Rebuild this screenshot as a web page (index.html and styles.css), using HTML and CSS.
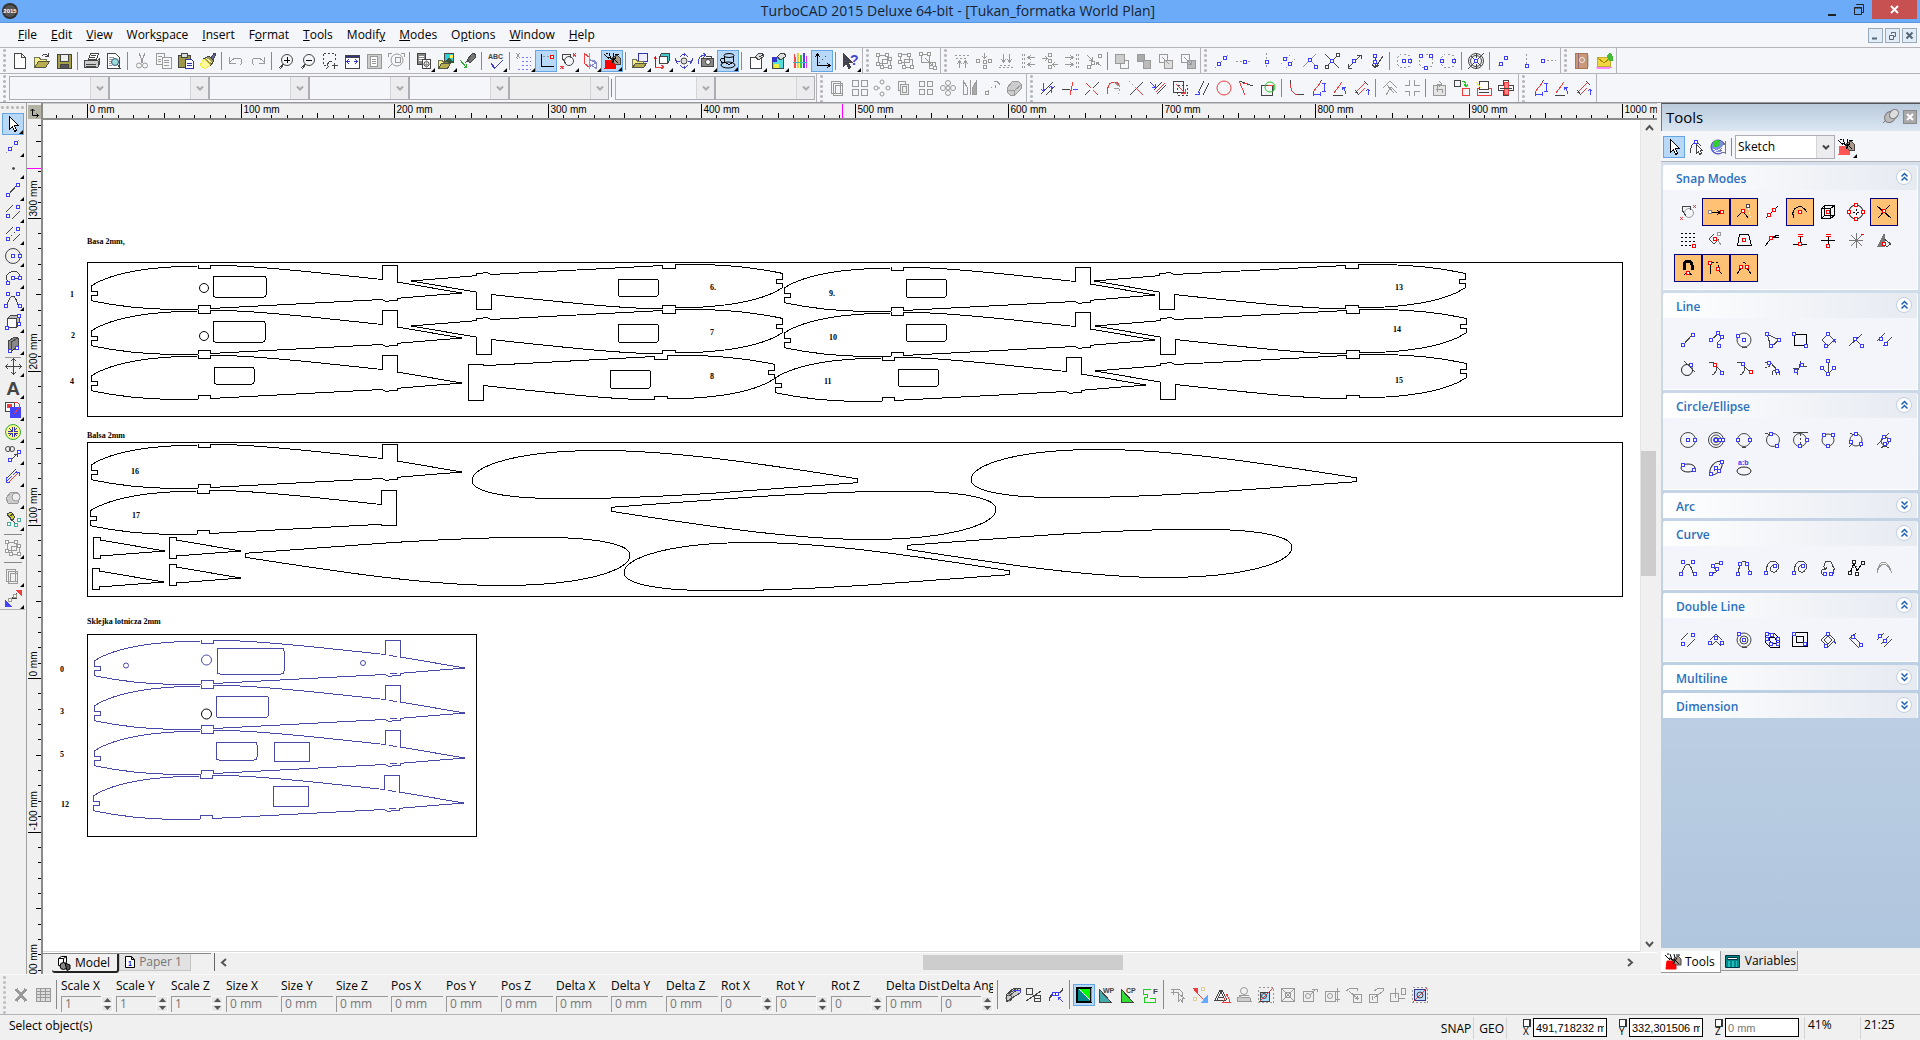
FILE: index.html
```html
<!DOCTYPE html>
<html lang="en">
<head>
    <meta charset="UTF-8">
    <meta name="viewport" content="width=device-width, initial-scale=1.0">
    <title>TurboCAD 2015 Deluxe 64-bit - [Tukan_formatka World Plan]</title>
    <link rel="stylesheet" href="styles.css">
</head>
<body>
    <header class="titlebar">
        <svg class="app-logo" width="16" height="16" viewBox="0 0 16 16"><circle cx="8" cy="8" r="8" fill="#333"/><circle cx="8" cy="8" r="6" fill="#555"/><text x="8" y="10" text-anchor="middle">2015</text></svg>
        <h1>TurboCAD 2015 Deluxe 64-bit - [Tukan_formatka World Plan]</h1>
        <div class="window-buttons">
            <button aria-label="Minimize"><svg width="10" height="13"><path d="M1 12h8" stroke="#222" stroke-width="2"/></svg></button>
            <button aria-label="Restore"><svg width="12" height="13"><path d="M1.500 4.500h7v7h-7zM1 5h8M3.500 2v-.5h7v8h-2" fill="none" stroke="#222"/></svg></button>
            <button class="close" aria-label="Close"><svg width="9" height="9"><path d="M1 1l7 7M8 1l-7 7" stroke="#fff" stroke-width="2"/></svg></button>
        </div>
    </header>

    <nav class="menubar">
        <a href="#"><u>F</u>ile</a>
        <a href="#"><u>E</u>dit</a>
        <a href="#"><u>V</u>iew</a>
        <a href="#">Work<u>s</u>pace</a>
        <a href="#"><u>I</u>nsert</a>
        <a href="#">F<u>o</u>rmat</a>
        <a href="#"><u>T</u>ools</a>
        <a href="#">Modif<u>y</u></a>
        <a href="#"><u>M</u>odes</a>
        <a href="#">O<u>p</u>tions</a>
        <a href="#"><u>W</u>indow</a>
        <a href="#"><u>H</u>elp</a>
        <div class="mdi-buttons">
            <button aria-label="Minimize drawing"><svg width="9" height="9"><path d="M1 7.500h5" stroke="#567" stroke-width="2"/></svg></button>
            <button aria-label="Restore drawing"><svg width="9" height="9"><path d="M1.500 4.500h4v4h-4zM3.500 3v-1.500h4v4h-1.500" fill="none" stroke="#567"/></svg></button>
            <button aria-label="Close drawing"><svg width="9" height="9"><path d="M1.500 1.500l6 6M7.500 1.500l-6 6" stroke="#567" stroke-width="2"/></svg></button>
        </div>
    </nav>

    <div class="toolbar-row row-one">
        <div class="toolbar" data-tools="new open save | print preview | cut copy paste brush | undo redo | zoomin zoomout zoomwin zoomext zoompage zoomall | insert> picture> pen | spell> | grid> ortho* lock> mirror> bag*> | openview> cube> orbit> camera> coffee*> | page> pagecolor> pencils ucs* | help>"></div>
        <div class="toolbar" data-tools="group ungroup explode"></div>
        <div class="toolbar" data-tools="altop almid albot alleft alcen alright alpoint | front back forward backward"></div>
        <div class="toolbar" data-tools="sgfree sghor sgver sgpar sgperp sgcross sgline sgangle | sgc1 sgc2 sgc3 | sgwheel | sgp1 sgp2 sgp3"></div>
        <div class="toolbar" data-tools="book mail"></div>
    </div>

    <div class="toolbar-row row-two">
        <div class="toolbar">
            <span class="combo"><select disabled aria-label="Layer"></select></span>
            <span class="combo"><select disabled aria-label="Pen style"></select></span>
            <span class="combo"><select disabled aria-label="Pen width"></select></span>
            <span class="combo"><select disabled aria-label="Pen pattern"></select></span>
            <span class="combo"><select disabled aria-label="Brush style"></select></span>
            <span class="combo grey"><select disabled aria-label="Colour"></select></span>
            <span class="sep"></span>
            <span class="combo"><select disabled aria-label="Material"></select></span>
            <span class="combo grey"><select disabled aria-label="Print style"></select></span>
        </div>
        <div class="toolbar" data-tools="cp1 cp2 cp3 cp4 cp5 cp6 cp7 cp8 solid"></div>
        <div class="toolbar" data-tools="m1 m2 m3 m4 m5 m6 m7 m8 m9 m10 m11 | m12 m13 m14 m15 | m16 m17 | m18 m19 m20 m21"></div>
        <div class="toolbar" data-tools="m13 m14 m15"></div>
    </div>

    <main>
        <div class="left-tools">
            <div class="toolbar vertical" data-tools="select*> sgfree> point> line> dline> mline> circle> arc> curve> box> slab> pan> text> fill> snap> dimension> modify> shape> spray> | group> | cp1> vertex>"></div>
        </div>

        <section class="drawing">
            <svg class="ruler-top" id="rulerTop"></svg>
            <svg class="ruler-left" id="rulerLeft"></svg>
            <button class="ruler-corner" aria-label="Origin"><svg width="11" height="11"><path d="M3.500 2v6.500h6M1.500 4l2-2 2 2M7.500 6.500l2 2-2 2" fill="none" stroke="#000"/></svg></button>
            <svg class="sheet" id="sheet">
                <defs>
                    <path id="rib" d="M0 21C20 8 60 1.500 107 1V3.500H119.500V.3C160 0 230 8 291 14.500V0H306V17L371 28 306 33.300V35.500H302L295 36.500 291 34.500 119.500 43.500V40.200H107V44C60 46 25 41 0 35.700V30H6V26H0Z"/>
                    <path id="ribShort" d="M0 21C20 8 60 1.500 107 1V3.500H119.500V.3C160 0 230 8 291 14.500V0H306V35.500H291V34.300L119.500 43.500V40.200H107V44C60 46 25 41 0 35.700V30H6V26H0Z"/>
                    <path id="foil" d="M0 0C0-14 40-30 125-30.500 210-31 320-12 385-2.300V1.700L240 12.300C180 16 130 18 88 17.600 30 17.500 0 10 0 0Z"/>
                    <path id="wedge" d="M0 0H7V3L72 14 7 19V21H0Z"/>
                    <path id="ribJoint" d="M295 15l8 2M296 34l7-1"/>
                </defs>
                <!-- drawn in window coordinates, shifted to the sheet's corner -->
                <g transform="translate(-43 -120)">
                    <g class="ink">
                        <path d="M87.500 262.500H1622.500V416.500H87.500ZM87.500 442.500H1622.500V596.500H87.500ZM87.500 634.500H476.500V836.500H87.500Z"/>
                        <use href="#rib" x="91" y="265"/>
                        <use href="#rib" x="91" y="310"/>
                        <use href="#rib" x="91" y="355"/>
                        <use href="#rib" transform="translate(782 309) rotate(180)"/>
                        <use href="#rib" transform="translate(782 354) rotate(180)"/>
                        <use href="#ribShort" transform="translate(774 400) rotate(180)"/>
                        <use href="#rib" x="784" y="267"/>
                        <use href="#rib" x="784" y="312"/>
                        <use href="#rib" x="775" y="357"/>
                        <use href="#rib" transform="translate(1465 309) rotate(180)"/>
                        <use href="#rib" transform="translate(1466 354) rotate(180)"/>
                        <use href="#rib" transform="translate(1466 399) rotate(180)"/>
                        <use href="#rib" x="91" y="444"/>
                        <use href="#ribShort" x="90" y="490"/>
                        <use href="#foil" x="472" y="481"/>
                        <use href="#foil" x="971" y="480"/>
                        <use href="#foil" x="624" y="573"/>
                        <use href="#foil" transform="translate(996 509) rotate(180)"/>
                        <use href="#foil" transform="translate(630 555) rotate(180)"/>
                        <use href="#foil" transform="translate(1292 547) rotate(180)"/>
                        <use href="#wedge" x="93" y="537"/>
                        <use href="#wedge" x="169" y="537"/>
                        <use href="#wedge" x="92" y="568"/>
                        <use href="#wedge" x="169" y="564"/>
                        <rect x="213" y="276" width="53" height="21" rx="2"/>
                        <rect x="213" y="321" width="52" height="21" rx="2"/>
                        <rect x="214" y="367" width="40" height="17" rx="2"/>
                        <rect x="618" y="279" width="40" height="17" rx="1"/>
                        <rect x="618" y="324" width="40" height="18" rx="1"/>
                        <rect x="610" y="370" width="40" height="18" rx="1"/>
                        <rect x="906" y="279" width="40" height="18" rx="1"/>
                        <rect x="906" y="324" width="40" height="17" rx="1"/>
                        <rect x="898" y="369" width="40" height="17" rx="1"/>
                        <circle cx="204" cy="288" r="4.500"/>
                        <circle cx="204" cy="336" r="4.500"/>
                        <circle cx="206.500" cy="714" r="5"/>
                    </g>
                    <g class="ink blue">
                        <use href="#rib" x="94" y="640"/><use href="#ribJoint" x="94" y="640"/>
                        <use href="#rib" x="94" y="685"/><use href="#ribJoint" x="94" y="685"/>
                        <use href="#rib" x="94" y="730"/><use href="#ribJoint" x="94" y="730"/>
                        <use href="#rib" x="93" y="775"/><use href="#ribJoint" x="93" y="775"/>
                        <circle cx="206.500" cy="660" r="5"/>
                        <circle cx="126" cy="665.500" r="2.500"/>
                        <circle cx="363" cy="663" r="2.500"/>
                        <rect x="217" y="648" width="67" height="26" rx="3"/>
                        <rect x="216" y="696" width="52" height="21" rx="1"/>
                        <rect x="216" y="742" width="41" height="18" rx="3"/>
                        <rect x="274" y="742" width="35" height="19"/>
                        <rect x="273" y="786" width="35" height="20"/>
                    </g>
                    <g class="notes">
                        <text x="87" y="244">Basa 2mm,</text>
                        <text x="87" y="438">Balsa 2mm</text>
                        <text x="87" y="624">Sklejka lotnicza 2mm</text>
                        <text x="70" y="297">1</text>
                        <text x="71" y="338">2</text>
                        <text x="70" y="384">4</text>
                        <text x="710" y="290">6.</text>
                        <text x="710" y="335">7</text>
                        <text x="710" y="379">8</text>
                        <text x="829" y="296">9.</text>
                        <text x="829" y="340">10</text>
                        <text x="824" y="384">11</text>
                        <text x="1395" y="290">13</text>
                        <text x="1393" y="332">14</text>
                        <text x="1395" y="383">15</text>
                        <text x="131" y="474">16</text>
                        <text x="132" y="518">17</text>
                        <text x="60" y="672">0</text>
                        <text x="60" y="714">3</text>
                        <text x="60" y="757">5</text>
                        <text x="61" y="807">12</text>
                    </g>
                </g>
            </svg>
            <div class="scroll-v">
                <button aria-label="Scroll up"><svg width="9" height="8"><path d="M1 6l3.500-4 3.500 4"/></svg></button>
                <span class="thumb"></span>
                <button aria-label="Scroll down"><svg width="9" height="8"><path d="M1 2l3.500 4 3.500-4"/></svg></button>
            </div>
            <div class="sheet-bar">
                <div class="sheet-tabs">
                    <button class="sheet-tab active"><svg width="16" height="16"><path d="M2.500 3.500l3-2h5v6l-3 3h-5z" fill="#fff" stroke="#000"/><path d="M2.500 3.500h5l3-2M7.500 3.500v7" fill="none" stroke="#000"/><circle cx="7.500" cy="11" r="3.500" fill="#888" stroke="#000"/><path d="M9 8l5 2v4l-3 1.500z" fill="#555" stroke="#000"/></svg>Model</button>
                    <button class="sheet-tab"><svg width="12" height="14"><path d="M1.500 1.500h6l3 3v8h-9zM7.500 1.500v3h3" fill="#fff" stroke="#000"/><text x="4" y="11">1</text></svg>Paper 1</button>
                </div>
                <div class="scroll-h">
                    <button aria-label="Scroll left"><svg width="8" height="9"><path d="M6 1l-4 3.500 4 3.500"/></svg></button>
                    <span class="thumb"></span>
                    <button aria-label="Scroll right"><svg width="8" height="9"><path d="M2 1l4 3.500-4 3.500"/></svg></button>
                </div>
            </div>
        </section>

        <aside>
            <div class="palette-title">
                <h2>Tools</h2>
                <button aria-label="Pin"><svg width="18" height="17"><path d="M1 15l5-5" stroke="#777"/><ellipse cx="8" cy="9" rx="5" ry="6" transform="rotate(40 8 9)" fill="#bbb" stroke="#777"/><ellipse cx="12" cy="6" rx="4" ry="5" transform="rotate(40 12 6)" fill="#ddd" stroke="#777"/></svg></button>
                <button class="palette-close" aria-label="Close palette"><svg width="8" height="8"><path d="M1 1l6 6M7 1l-6 6" stroke="#fff" stroke-width="2"/></svg></button>
            </div>
            <div class="palette-bar">
                <div class="tools" data-tools="select* node globe |"></div>
                <span class="combo"><select aria-label="Tool set"><option>Sketch</option></select></span>
                <div class="tools" data-tools="bagsoft>"></div>
            </div>
            <div class="palette-body">
                <section class="group">
                    <h3>Snap Modes <button data-chevron="up"></button></h3>
                    <div class="grid" data-tools="sn1 sn2* sn3* sn4 sn5* sn6 sn7 sn8* sn9 sn10 sn11 sn12 sn13 sn14 sn15 sn16 sn17* sn18* sn19*"></div>
                </section>
                <section class="group">
                    <h3>Line <button data-chevron="up"></button></h3>
                    <div class="grid" data-tools="line poly polygon tri rect rrect perp para ln1 ln2 ln3 ln4 ln5 ln6"></div>
                </section>
                <section class="group">
                    <h3>Circle/Ellipse <button data-chevron="up"></button></h3>
                    <div class="grid" data-tools="circle conc c2 c3 c4 c5 c6 c7 el1 el2 el3"></div>
                </section>
                <section class="group">
                    <h3>Arc <button data-chevron="down"></button></h3>
                </section>
                <section class="group">
                    <h3>Curve <button data-chevron="up"></button></h3>
                    <div class="grid" data-tools="curve cv1 cv2 cv3 cv3 cv4 cv5 cv6"></div>
                </section>
                <section class="group">
                    <h3>Double Line <button data-chevron="up"></button></h3>
                    <div class="grid" data-tools="dline d1 d2 d3 d4 d5 d6 d7"></div>
                </section>
                <section class="group">
                    <h3>Multiline <button data-chevron="down"></button></h3>
                </section>
                <section class="group">
                    <h3>Dimension <button data-chevron="down"></button></h3>
                </section>
            </div>
            <div class="palette-tabs">
                <button class="active" data-icon="bag">Tools</button>
                <button data-icon="calc">Variables</button>
            </div>
        </aside>
    </main>

    <div class="inspector">
        <div class="tools" data-tools="cancel table |"></div>
        <div class="fields" id="fields"></div>
        <div class="tools" data-tools="| in1 in2 in3 | in4* in5 in6 in7 | in8 in9 in10 in11 in12 in13 in14 in15 in16 in17 in18 in19"></div>
    </div>

    <footer class="statusbar">
        <span class="message">Select object(s)</span>
        <span class="mode">SNAP</span>
        <span class="mode">GEO</span>
        <div class="coords">
            <label class="lock"><input type="checkbox">X</label><input class="coord" aria-label="X" value="491,718232 m">
            <label class="lock"><input type="checkbox">Y</label><input class="coord" aria-label="Y" value="332,301506 m">
            <label class="lock"><input type="checkbox">Z</label><input class="coord" aria-label="Z" value="0 mm" disabled>
        </div>
        <span class="zoom">41%</span>
        <span class="clock">21:25</span>
    </footer>

    <script src="script.js"></script>
</body>
</html>
```
FILE: styles.css
```css
* {
    box-sizing: border-box;
}

body {
    margin: 0;
    height: 100vh;
    display: flex;
    flex-direction: column;
    background-color: #f0f0f0;
    color: #000;
    font-family: "Open Sans", "Noto Sans", sans-serif;
    font-size: 12px;
    line-height: 16px;
    overflow: hidden;
}

button {
    margin: 0;
    padding: 0;
    border: none;
    background: none;
    font: inherit;
    color: inherit;
    display: flex;
    align-items: center;
    justify-content: center;
}

input,
select {
    font: inherit;
    margin: 0;
    border-radius: 0;
    appearance: none;
}

svg {
    display: block;
    flex: none;
}

/* title bar */

.titlebar {
    display: flex;
    align-items: center;
    height: 23px;
    flex: none;
    padding-left: 2px;
    background-color: #6babf8;
    border-bottom: 1px solid #5a96dc;
}

.app-logo text {
    font: bold 6px "Liberation Sans", sans-serif;
    fill: #fff;
}

h1 {
    flex: 1;
    margin: 0;
    padding-left: 80px;
    text-align: center;
    font-size: 14px;
    line-height: 20px;
    font-weight: 400;
    color: #1a2430;
}

.window-buttons {
    display: flex;
    align-self: flex-start;
    padding-right: 3px;
}

.window-buttons button {
    width: 27px;
    height: 19px;
}

.window-buttons .close {
    width: 45px;
    background-color: #c75050;
}

/* menu */

.menubar {
    display: flex;
    align-items: center;
    gap: 14px;
    height: 25px;
    flex: none;
    padding: 0 3px 0 18px;
    background-color: #f5f6f9;
    border-bottom: 1px solid #b4b4b8;
}

.menubar a {
    color: #000;
    text-decoration: none;
}

.mdi-buttons {
    display: flex;
    gap: 2px;
    margin-left: auto;
}

.mdi-buttons button {
    width: 15px;
    height: 15px;
    border: 1px solid #9ab;
    background-color: #e3edf7;
}

/* toolbars */

.toolbar-row {
    display: flex;
    flex: none;
    background-color: #f5f6f9;
    border-bottom: 1px solid #b4b4b8;
}

.row-one {
    height: 26px;
}

.row-two {
    height: 29px;
    border-bottom-color: #98989c;
}

.toolbar,
.tools {
    display: flex;
    align-items: center;
    flex: none;
}

.toolbar-row .toolbar {
    padding: 0 1px 0 9px;
    border-right: 1px solid #b4b4b8;
    background: radial-gradient(circle, #b8b8bc 1px, transparent 2px) 2px 0 / 5px 5px repeat-y;
}

.toolbar-row .toolbar + .toolbar {
    padding-left: 10px;
}

.tool {
    position: relative;
    width: 22px;
    height: 22px;
    flex: none;
}

.tool.active {
    background-color: #b8d8f8;
    border: 1px solid #66a5e4;
}

/* black corner on tools that open a fly-out */
.tool.fly::after {
    content: "";
    position: absolute;
    right: 0;
    bottom: 0;
    border: 2px solid #000;
    border-top-color: transparent;
    border-left-color: transparent;
}

.tool svg {
    shape-rendering: crispEdges;
}

.tool circle,
.tool ellipse {
    shape-rendering: auto;
}

.tool text,
.sheet-tab text {
    font-family: "Liberation Sans", sans-serif;
    font-weight: bold;
}

.sheet-tab text {
    font-size: 7px;
    fill: #00c;
}

.sep {
    width: 2px;
    height: 18px;
    margin: 0 2px;
    flex: none;
    border-left: 1px solid #888;
}

.combo {
    display: flex;
    width: 100px;
    height: 24px;
    flex: none;
    border: 1px solid #acacb2;
    background-color: #f5f6f9;
}

.combo.grey select {
    background-color: #efeff0;
}

.combo select {
    flex: 1;
    min-width: 0;
    padding: 0 2px;
    border: none;
    background: none;
    opacity: 1;
}

.combo-arrow {
    width: 18px;
    display: grid;
    place-items: center;
    border-left: 1px solid #d4d4d6;
    background-color: #ececee;
}

/* work area */

main {
    flex: 1;
    min-height: 0;
    display: grid;
    grid-template-columns: 27px 1fr 259px;
}

.left-tools {
    border-right: 1px solid #a0a0a0;
    background-color: #f0f0f0;
}

.toolbar.vertical {
    flex-direction: column;
    width: 25px;
    padding: 10px 0 0 1px;
    border-bottom: 1px solid #b4b4b8;
    background: radial-gradient(circle, #b8b8bc 1px, transparent 2px) 0 2px / 5px 5px repeat-x;
}

.vertical .sep {
    width: 18px;
    height: 1px;
    margin: 3px 0 2px;
    border-left: none;
    border-top: 1px solid #888;
}

.drawing {
    display: grid;
    grid-template-columns: 16px 1fr 17px;
    grid-template-rows: 17px 1fr 22px;
    margin-right: 4px;
    min-width: 0;
}

.ruler-top {
    grid-area: 1 / 2 / 2 / 4;
    width: 100%;
    height: 17px;
    border-top: 1px solid #c8c8c8;
    border-bottom: 2px solid #8a8a8a;
}

.ruler-left {
    grid-area: 1 / 1 / 4 / 2;
    width: 16px;
    height: 100%;
    border-right: 2px solid #8a8a8a;
}

.ruler-top text,
.ruler-left text {
    font: 10px "Liberation Sans", sans-serif;
    fill: #000;
}

.ruler-top,
.ruler-left,
.ink {
    shape-rendering: crispEdges;
}

.ruler-corner {
    grid-area: 1 / 1;
    width: 13px;
    height: 14px;
    margin: 2px 0 0 1px;
    background-color: #b4b4a4;
    z-index: 1;
}

.sheet {
    grid-area: 2 / 2;
    width: 100%;
    height: 100%;
    background-color: #fff;
    border-bottom: 1px solid #d8d8d8;
}

.ink {
    fill: none;
    stroke: #000;
    stroke-width: 1px;
}

.ink circle {
    shape-rendering: auto;
}

.ink.blue {
    stroke: #4848a8;
}

.notes {
    font: bold 8px "Liberation Serif", serif;
}

.scroll-v,
.scroll-h {
    display: grid;
    background-color: #f0f0f0;
}

.scroll-v svg,
.scroll-h svg {
    fill: none;
    stroke: #555;
    stroke-width: 2px;
}

.thumb {
    background-color: #cdcdcd;
}

.scroll-v {
    grid-area: 2 / 3;
    grid-template-rows: 16px 315fr 126fr 360fr 16px;
    border-left: 1px solid #e4e4e4;
}

.scroll-v .thumb {
    grid-row: 3;
    width: 15px;
}

.scroll-v button:last-child {
    grid-row: 5;
}

.sheet-bar {
    grid-area: 3 / 2 / 4 / 4;
    display: flex;
    align-items: flex-start;
    border-top: 1px solid #fff;
}

.sheet-tabs {
    display: flex;
    align-items: flex-start;
    width: 168px;
    padding-left: 9px;
    border-top: 1px solid #888;
}

.sheet-tab {
    height: 17px;
    padding: 0 8px 0 4px;
    gap: 3px;
    color: #777;
    background-color: #e2e2e2;
    border: 1px solid #c4c4c4;
    border-top: none;
}

.sheet-tab.active {
    height: 19px;
    color: #000;
    background-color: #f0f0f0;
    border: none;
    border-right: 2px solid #222;
    border-bottom: 2px solid #222;
    border-radius: 0 0 3px 3px;
    padding: 0 7px 0 4px;
}

.scroll-h {
    flex: 1;
    height: 18px;
    grid-template-columns: 18px 690fr 200fr 498fr 18px;
    align-items: center;
    margin-left: 3px;
    padding-right: 18px;
    border-left: 1px solid #666;
}

.scroll-h .thumb {
    grid-column: 3;
    height: 15px;
}

.scroll-h button:last-child {
    grid-column: 5;
}

/* palette */

aside {
    display: flex;
    flex-direction: column;
    min-width: 0;
}

.palette-title {
    display: flex;
    align-items: center;
    gap: 3px;
    height: 28px;
    flex: none;
    padding: 0 3px 2px 4px;
    border-top: 1px solid #555;
    border-left: 1px solid #777;
    background-image: linear-gradient(#b9cadc, #dbe6f2);
}

h2 {
    flex: 1;
    margin: 0;
    font-size: 15px;
    line-height: 20px;
    font-weight: 400;
}

.palette-close {
    width: 14px;
    height: 14px;
    background-color: #a8a8a8;
    border: 1px solid #888;
}

.palette-bar {
    display: flex;
    align-items: center;
    height: 31px;
    flex: none;
    padding: 2px 0 0 2px;
    background-color: #f5f6f9;
    border-bottom: 1px solid #b4b4b8;
}

.palette-bar .combo {
    background-color: #fff;
}

.palette-bar .combo select {
    color: #000;
}

.palette-body {
    flex: 1;
    display: flex;
    flex-direction: column;
    gap: 3px;
    padding: 3px 2px;
    background-image: linear-gradient(#d5e0ec, #b0c6de);
}

.group {
    background-color: #f3f5fa;
    border-right: 1px solid #fff;
    border-radius: 3px 3px 0 0;
}

h3 {
    display: flex;
    align-items: center;
    justify-content: space-between;
    height: 25px;
    margin: 0;
    padding: 3px 5px 0 13px;
    font-size: 12px;
    line-height: 20px;
    font-weight: 600;
    color: #2a70c0;
    background-image: linear-gradient(90deg, #fff, #e6eaf1);
    border-radius: 3px 3px 0 0;
}

h3 button {
    width: 16px;
    height: 16px;
    margin-top: -4px;
    border: 1px solid #c2cddd;
    border-radius: 8px;
    background-color: #fff;
}

.grid {
    display: grid;
    grid-template-columns: repeat(8, 28px);
    grid-auto-rows: 28px;
    padding: 8px 11px 7px;
    border-bottom: 1px solid #fff;
}

.grid .tool {
    width: 28px;
    height: 28px;
}

.grid .tool.active {
    background-color: #ffc274;
    border: 1px solid #000080;
}

.palette-tabs {
    display: flex;
    align-items: flex-start;
    height: 26px;
    flex: none;
    padding-top: 3px;
}

.palette-tabs button {
    height: 20px;
    gap: 3px;
    padding: 0 1px 0 3px;
    background-color: #e8e8e8;
    border-right: 1px solid #999;
    border-bottom: 1px solid #999;
}

.palette-tabs .active {
    height: 22px;
    padding: 0 5px 0 3px;
    background-color: #fff;
}

/* inspector bar */

.inspector {
    display: flex;
    align-items: center;
    height: 41px;
    flex: none;
    padding-left: 10px;
    border-top: 1px solid #f8f8fc;
    border-bottom: 1px solid #b4b4b8;
    background: radial-gradient(circle, #c0c0c4 1px, transparent 2px) 2px 0 / 5px 5px repeat-y;
}

.fields {
    display: flex;
    gap: 3px;
    padding-left: 1px;
}

.field {
    width: 52px;
}

.field label {
    display: block;
    height: 18px;
    white-space: nowrap;
}

.field:last-child label {
    overflow: hidden;
}

.field-box {
    display: flex;
    height: 16px;
}

.field input {
    flex: 1;
    min-width: 0;
    padding: 0 3px;
    color: #777;
    background-color: #f0f0f0;
    border: none;
    border-top: 1px solid #999;
    border-left: 1px solid #999;
}

.spin {
    width: 12px;
    display: flex;
    flex-direction: column;
    justify-content: space-between;
}

.spin button {
    height: 8px;
    background-color: #e6e6e6;
    border: 1px solid #f8f8f8;
}

.inspector > .tools:last-child {
    padding-left: 2px;
}

.inspector > .tools .sep {
    height: 29px;
}

/* status bar */

.statusbar {
    display: flex;
    align-items: center;
    height: 25px;
    flex: none;
    padding: 0 18px 0 9px;
}

.message {
    flex: 1;
    padding-bottom: 3px;
}

.mode {
    height: 22px;
    line-height: 24px;
    padding: 0 2px 0 5px;
    border-right: 1px solid #d4d4d4;
}

.coords {
    display: flex;
    align-items: center;
    padding-left: 15px;
}

.lock {
    width: 11px;
    font-size: 10px;
    line-height: 9px;
    padding-left: 1px;
}

.lock input {
    display: block;
    width: 8px;
    height: 8px;
    border: 1px solid #333;
    border-right-width: 2px;
    background-color: #fff;
}

.coord {
    width: 74px;
    height: 19px;
    margin-right: 11px;
    padding: 0 2px;
    border: 1px solid #000;
    background-color: #fff;
    font: 11px "Liberation Sans", sans-serif;
}

.coord:disabled {
    color: #777;
    margin-right: 5px;
}

.zoom,
.clock {
    height: 22px;
    padding-left: 3px;
    border-left: 1px solid #d4d4d4;
}

.zoom {
    width: 56px;
}

.clock {
    width: 42px;
}
```
FILE: script.js
```js
const GREY = '#999', DARK = '#444', BLUE = '#3c3cff', RED = '#f03c3c';

// small drawing helpers, all on an 18 x 18 box
const p = (d, c = DARK, dash) => `<path d="${d}" fill="none" stroke="${c}"${dash ? ' stroke-dasharray="2 2"' : ''}/>`;
const f = (d, fill, c = DARK) => `<path d="${d}" fill="${fill}" stroke="${c}"/>`;
const o = (x, y, r, c = DARK, fill = 'none') => `<circle cx="${x}" cy="${y}" r="${r}" fill="${fill}" stroke="${c}"/>`;
const t = (x, y, size, str, c = DARK) => `<text x="${x}" y="${y}" font-size="${size}" fill="${c}">${str}</text>`;
// grip squares, given as x,y pairs
const n = (pts, c = BLUE) => pts.split(' ').map(s => {
    const [x, y] = s.split(',').map(Number);
    return `<rect x="${x - 1.5}" y="${y - 1.5}" width="3" height="3" fill="#fff" stroke="${c}"/>`;
}).join('');
const r = (x, y, w, h, c = GREY, fill = 'none') => `<rect x="${x}.5" y="${y}.5" width="${w}" height="${h}" fill="${fill}" stroke="${c}"/>`;

const BAG = red => f('M3 8h9v8h-10z', red, red) + f('M8 7l6-4 3 3v6h-5z', '#a98') + p('M1 2l5 5M6 1l2 6M10 1l1 4M3 1h2M10 6l5 5M13 5l-4 6M12 2h4M5 5l6 3', '#000');
const LENS = o(10, 8, 5.5) + p('M6 12l-4 4M7 12l-4 5');

const icons = {
    new: f('M3.500 1.500h7l4 4v11h-11z', '#fff') + p('M10.500 1.500v4h4'),
    open: f('M1.500 15.500v-10h5l1 2h6v2', '#f4f08c', '#775') + f('M1.500 15.500l4-6h11l-4 6z', '#b8ae50', '#554') + p('M9 4q3-3 6 0M15 1v3h-3'),
    save: f('M2.500 2.500h14v14h-14z', '#a6a048') + f('M5.500 2.500h8v7h-8z', '#eee') + f('M5.500 12.500h8v4h-8z', '#555'),
    print: f('M5.500 7.500l2-6h8l-2 6z', '#fff') + f('M1.500 8.500h13l2-2v6l-2 3h-13z', '#ccc') + p('M3 12h10M3 14h10M8 3h5M7 5h5M15 9v6'),
    preview: f('M2.500 1.500h8l4 4v11h-12z', '#fff') + o(10, 10, 3.5, '#357', '#9dd') + p('M12 12l4 5') + p('M4 5h5M4 7h3M4 9h2M4 11h2M4 13h3', GREY),
    cut: p('M6 1l4 10M12 1l-4 10', GREY) + o(6, 13.5, 2.5, GREY) + o(12, 13.5, 2.5, GREY),
    copy: r(1, 1, 8, 11) + r(7, 5, 9, 11, GREY, '#f5f6f9') + p('M9 8h5M9 10.500h5M9 13.500h5M3 4h4M3 7h3M3 9h3', GREY),
    paste: f('M1.500 3.500h12v12h-12z', '#9c9848') + f('M4.500 1.500h6v4h-6z', '#ddd') + f('M8.500 7.500h6l2 2v7h-8z', '#fff', '#33a') + p('M10 11.500h5M10 13.500h5', '#33a'),
    brush: f('M12 6l3-5 2 1-3 6z', '#669') + f('M4 7l6-3 5 5-4 5z', '#9d9850') + p('M5 8l6 5M7 6l6 5', '#ffa') + f('M1 13l4-6 6 6-5 4z', '#fff8a0', '#ee4'),
    undo: p('M2.500 5v6h6M3 10q5-6 11-3 2 3-1 6', GREY),
    redo: p('M15.500 5v6h-6M15 10q-5-6-11-3-2 3 1 6', GREY),
    zoomin: LENS + p('M7 8h6M10 5v6', '#000'),
    zoomout: LENS + p('M7 8h6', '#000'),
    zoomwin: p('M2.500 1.500h12v6M2.500 1.500v12h4', DARK, 1) + p('M11 9q-5 0-4 5M8 14l-3 3M13.500 11v6M10.500 13.500h6'),
    zoomext: r(2, 3, 14, 13, DARK, '#fff') + f('M2.500 3.500h14v2h-14z', '#338', DARK) + p('M4 9.500h3M11 9.500h4M6 7l-2 2.500 2 2.500M12 7l2 2.500-2 2.500', '#33c'),
    zoompage: r(2, 2, 14, 14, GREY, '#ccc') + r(5, 4, 7, 10, GREY, '#fff') + p('M7 7h4M7 9h4M7 11h4', GREY),
    zoomall: o(10, 8, 6, GREY) + r(8, 5, 5, 5) + p('M5 12l-4 4M1 1h4M1 1v4M17 1v4M14 1h3', GREY),
    insert: f('M2.500 1.500h8v11h-8z', '#888') + p('M4 4h5M4 6h5M4 8h5', '#fff') + f('M7.500 7.500h8v9h-8z', '#fff') + o(11.5, 12, 2.5) + p('M11.500 8v8M8 12h7', GREY),
    picture: f('M7.500 1.500h9v9h-9z', '#3cd') + f('M8 10l4-4 4 4z', '#353', '#353') + f('M13 3h2v2h-2z', '#fe4', '#fe4') + f('M1.500 16.500v-8h4l1 2h4v6z', '#f4f08c', '#775') + f('M1.500 16.500l3-5h9l-3 5z', '#b8ae50', '#554'),
    pen: f('M8 8l5-6q4-1 4 3l-6 6z', '#777') + p('M6 11l5-4') + p('M1 8l6 7', '#3a3') + p('M5 15h2v-3', '#3a3'),
    spell: t(1, 7, 7, 'ABC') + p('M4 11l4 5 8-8M4 12l4 5', '#3c3cc8'),
    grid: p('M2 6v.5M7 5h9M7 9h9M7 13h9M3 17h13', '#77f', 1) + p('M1 1l4 5M5 1l-4 5', GREY),
    ortho: p('M4.500 2v12.500h12', '#000') + p('M6 4.500h7', GREY, 1) + n('14.500,4.500', '#f00'),
    lock: p('M1 14l4 3M1 17l4-3M14 1l3 4M17 1l-3 4', RED) + o(10, 9, 4.5) + p('M4 2h7v4M4 2l-1 4 4 6'),
    mirror: p('M3.500 1.500l5 4v10l-5-4z', RED) + p('M8.500 7.500l7 4v5l-7-4zM15 11l-7 4M8 9l5-1 3 4', '#88c') + p('M8.500 1v16', GREY),
    bag: BAG('#f00'),
    bagsoft: BAG('#f55'),
    openview: r(7, 1, 9, 8, '#33a', '#eef') + f('M1.500 15.500v-8h4l1 2h6v6z', '#f4f08c', '#775') + f('M1.500 15.500l3-4h11l-3 4z', '#b8ae50', '#554'),
    cube: f('M6.500 4.500l2-3h8v7l-2 3h-8z', '#4cc') + r(6, 4, 8, 7, DARK, '#fff') + p('M2.500 5v10h8M1 7l1.500-2 1.500 2M8 13l3 2-3 2', RED) + p('M2.500 5v10', '#33a'),
    orbit: o(9, 9, 3, DARK, '#ddd') + p('M5 5q4-5 8 0M5 13q4 5 8 0M1 6q-1 3 2 6M17 6q1 3-2 6M9 1v3M9 14v3M1 9h4M13 9h4', '#44c'),
    camera: f('M4.500 6.500h12v8h-12z', '#888') + o(11, 10, 2.5, DARK, '#fff') + p('M1 12q0-9 7-9M6 1l3 2-3 3', '#44c') + p('M9 4h5v2'),
    coffee: `<ellipse cx="10" cy="3.500" rx="5" ry="2" fill="none" stroke="#000"/><ellipse cx="9" cy="13" rx="7" ry="3" fill="none" stroke="#000"/>` + p('M5 4q0 8 4 8h2q4 0 4-8M5 6q-4 0-3 3t4 1', '#000'),
    page: r(3, 5, 11, 11, DARK, '#fff') + f('M8 5l4-4h3l2 3-5 4z', '#ddd') + p('M12 5l4-2', DARK),
    pagecolor: r(3, 5, 11, 11, DARK, '#5dd') + f('M3.500 5.500h4v4h-4z', '#33c', '#33c') + f('M5 12h4v3h-4z', '#ee4', '#ee4') + f('M8 5l4-4h3l2 3-5 4z', '#ddd'),
    pencils: p('M3.500 2v14M4.500 5v11', '#f44') + p('M6.500 1v15M7.500 1v15', '#ec3') + p('M9.500 3v13M10.500 3v13', '#3c3') + p('M12.500 1v15M13.500 1v15', '#44f') + p('M15.500 4v12', '#e3e') + p('M2 10.500h14', '#3bb'),
    ucs: p('M4.500 2v11.500h12M2 5l2.500-3 2.500 3M14 11l3 2.500-3 2.500', '#000') + p('M6 11l7-7', DARK, 1),
    help: f('M2.500 1.500v13l3-3 2 5 2-1-2-5h4z', '#445') + t(9, 13, 14, '?', '#44c'),
    group: r(3, 3, 9, 8) + r(7, 7, 8, 8) + n('3,3 12,3 3,12 15,7 7,15 15,15', GREY),
    ungroup: r(3, 2, 9, 8) + r(7, 7, 8, 8) + n('3,3 12,3 3,10 7,15 15,15', GREY),
    explode: r(2, 2, 8, 8) + r(10, 10, 6, 6) + p('M6 6l7 7M13 10v3h-3', GREY) + n('2,2 10,2 16,16', GREY),
    altop: p('M2 3.500h14M3 6.500h12', GREY, 1) + p('M6.500 16v-7M4 12l2.500-3 2.500 3M12.500 16v-7M10 12l2.500-3 2.500 3', GREY),
    almid: p('M9.500 1v5M7 4l2.500 2 2.500-2M9.500 17v-4', GREY) + n('3,9 9.500,10 15,9 9.500,15', GREY),
    albot: p('M2 15.500h14M3 13h12', GREY, 1) + p('M6.500 2v8M4 7l2.500 3 2.500-3M12.500 2v8M10 7l2.500 3 2.500-3', GREY),
    alleft: p('M3.500 2v14M5.500 2v14', GREY, 1) + p('M16 5.500h-7M12 3l-3 2.500 3 2.500M16 12.500h-7M12 10l-3 2.500 3 2.500', GREY),
    alcen: n('9,3 9,9 9,15', GREY) + p('M1 6.500h5M4 4l2 2.500-2 2.500M17 12.500h-5M14 10l-2 2.500 2 2.500', GREY),
    alright: p('M13.500 2v14M15.500 2v14', GREY, 1) + p('M2 5.500h8M7 3l3 2.500-3 2.500M2 12.500h8M7 10l3 2.500-3 2.500', GREY),
    alpoint: p('M2 3l5 5M7 5v3h-3M16 14l-5-4M11 13v-3h3M5 15l3-4', GREY) + n('15,4 8,11 4,15', GREY),
    front: r(7, 8, 8, 8) + r(2, 2, 9, 9, GREY, '#ccc'),
    back: r(2, 2, 7, 7, GREY, '#aaa') + r(8, 8, 7, 8, GREY, '#bbb'),
    forward: r(2, 2, 8, 8) + r(7, 8, 8, 8, GREY, '#ddd') + p('M5 5l7 7', GREY),
    backward: r(2, 2, 8, 8) + r(8, 8, 8, 8, GREY, '#bbb') + p('M5 5l7 7M12 9v3h-3', GREY),
    sgfree: p('M2 16l14-14', GREY, 1) + n('6,12 12,6'),
    sghor: p('M1 9.500h16', GREY, 1) + n('9.500,9.500'),
    sgver: p('M9.500 1v16', GREY, 1) + n('9.500,9.500'),
    sgpar: p('M2 12l9-9M7 16l9-9', GREY, 1) + n('6,7 11,12'),
    sgperp: p('M2 15l13-13M9 8l7 7', GREY) + n('9,8 15,15'),
    sgcross: p('M2 2l14 14M2 16l13-13') + n('9,9') + n('4,15 15,3', DARK),
    sgline: p('M3 16l13-13M3 12v4h4M12 3h4v4') + n('9,9'),
    sgangle: p('M8 2v14l8-12M5 12l3 4 4-3') + n('8,4 8,10'),
    sgc1: p('M9 2q7 0 7 7t-7 7-7-7 7-7', GREY, 1) + n('9,9 15,9'),
    sgc2: p('M9 2q7 0 7 7t-7 7-7-7 7-7', GREY, 1) + n('4,4 14,4 9,16'),
    sgc3: p('M9 2q7 0 7 7t-7 7-7-7 7-7', GREY, 1) + n('3,9 15,9'),
    sgwheel: o(9, 9, 7.5) + o(9, 9, 5.5) + p('M1 17l16-16M4 4l10 10M9 1v5M9 12v5') + n('9,9'),
    sgp1: p('M3 14l11-11', GREY, 1) + n('6,12 11,6'),
    sgp2: p('M9.500 2v14', GREY, 1) + n('9.500,14'),
    sgp3: p('M4 8.500h13', GREY, 1) + n('4,8.500'),
    book: r(2, 1, 12, 15, '#a87858', '#c89878') + p('M5.500 1v15', '#967') + o(9, 8, 2.5, '#eee') + p('M15.500 3v12', '#ccc'),
    mail: f('M2.500 5.500h13v9h-13z', '#f0d840', '#c8a830') + p('M3 6l6 5 6-5', '#a80') + f('M12 4l3-3 2 3v4h-3z', '#4b3', '#4b3') + p('M1 15.500h16M2 16.500h13', '#f8f'),

    cp1: r(2, 2, 9, 12) + r(4, 4, 9, 12) + r(6, 6, 7, 8),
    cp2: r(1, 1, 6, 6) + r(10, 1, 6, 6) + r(1, 10, 6, 6) + r(10, 10, 6, 6),
    cp3: o(9, 3, 2, GREY) + o(9, 15, 2, GREY) + o(3, 9, 2, GREY) + o(15, 9, 2, GREY) + o(6, 9, 0.5, GREY),
    cp4: r(3, 2, 7, 9) + r(5, 5, 8, 10, GREY, '#eee') + r(7, 7, 4, 6),
    cp5: r(2, 2, 5, 5) + r(10, 2, 5, 5) + r(2, 10, 5, 5) + r(10, 10, 5, 5),
    cp6: o(9, 4, 2.5, GREY) + o(9, 14, 2.5, GREY) + o(4, 9, 2.5, GREY) + o(14, 9, 2.5, GREY) + o(9, 9, 2, GREY),
    cp7: p('M2.500 2v13h4v-6zM9 1v15', GREY) + f('M15.500 2v13h-4v-6z', '#aaa', GREY),
    cp8: n('4,14', GREY) + p('M5 12l6-6', GREY, 1) + p('M11 2h3l3 4M12 6v3', GREY),
    solid: f('M2 9l6-7h5l3 3v5l-6 6h-5l-3-3z', '#ccc', GREY) + p('M2 11l7 1 7-6M9 12v4', GREY),
    m1: p('M2 15l12-12M7 16l9-9') + p('M4 4v8M2 10l2 2 2-2M12 14v-7M10 9l2-2 2 2', '#44f'),
    m2: p('M1 10.500h8') + p('M12 3l-3 13', RED) + p('M12 10.500h5', '#44f'),
    m3: p('M2 16l5-5M10 9l6-6') + p('M3 4l5 5M10 11l5 5', RED),
    m4: p('M3 15q-2-11 6-12 4 0 5 3', RED) + p('M14 6q2 4-1 9', GREY, 1) + p('M9 9h5M9 3l6 5', GREY),
    m5: p('M2 2l7 7', GREY, 1) + p('M3 16l13-13') + p('M9 9l7 7', RED),
    m6: p('M5 11l8-8M8 15l9-9') + p('M7 13l9-9', RED) + p('M1 3l5 5M6 5v3h-3', '#44f'),
    m7: r(2, 2, 10, 11, DARK) + p('M6.500 6.500h10v10h-10z', DARK, 1) + p('M5 5l9 9M14 10v4h-4', RED),
    m8: p('M5 14l6-12M10 16l6-12') + p('M2 15h5M5 12l2 3', '#44f'),
    m9: o(9, 9, 7, RED),
    m10: p('M2 2l14 5') + p('M2 2l6 14', RED) + p('M6 4l5 1', RED),
    m11: r(2, 6, 11, 10, DARK) + o(11, 8, 5, '#2c2') + p('M9 6h5v6', RED),
    m12: p('M3.500 1v4') + p('M3.500 5q0 9 7 11', RED) + p('M10 15.500h7'),
    m13: p('M4 13l8-10', RED) + p('M4 15.500h7M15.500 4v8M4 13v4M11 13v4M13 4h4M13 12h4', '#44f') + p('M11 3l2-2'),
    m14: p('M3 14l8-11', RED) + p('M2 16.500h10', DARK) + p('M11 8q4 2 3 7M11 11v-3h4', '#44f'),
    m15: p('M2 14l11-11M6 15l6-6', RED) + p('M2 11l4 5M11 2l4 4', DARK) + p('M15 16v-6M13 12l2-2 2 2', '#44f'),
    m16: p('M2 9l7-7M9 2l7 7M5 16l5-8 6 6', GREY) + p('M5 5l8 9', GREY),
    m17: p('M6.500 1v5h-5M11.500 1v5h5M6.500 17v-5h-5M11.500 17v-5h5', GREY),
    m18: f('M2.500 6.500h12v10h-12z', '#e4e4e4', GREY) + p('M6 13v-8h4M8 2l3 3-3 3M5 10h6v4', GREY),
    m19: r(1, 1, 6, 6, DARK) + r(9, 9, 7, 7, RED) + p('M9 2q4 0 4 5M11 5l2 3 2-3', '#2c2'),
    m20: r(2, 9, 14, 7, RED) + r(4, 2, 9, 8, DARK, '#fff') + p('M4 13h10') + p('M1 3l5 6', '#ee4'),
    m21: f('M6.500 1.500h5v5h5v5h-5v5h-5v-5h-5v-5h5z', '#fff') + f('M7 3h4v12h-4z', '#f88', RED) + p('M3 9h12'),

    select: f('M5.500 1.500v13l3-3 2 5 2-1-2-5h4z', '#fff', '#000'),
    node: p('M3 15q1-11 7-11l4 4') + n('9,4') + f('M9.500 6.500v9l2-2 1 3 2-1-1-3h2z', '#fff'),
    globe: o(9, 9, 7, '#44b', '#7d8de0') + f('M4 4l5-2 2 4-3 3-4-1z', '#3c3', '#3c3') + f('M11 12l5-7v10z', '#fff', '#777') + p('M5 13q6 4 11-2M4 11q5 4 11-4', '#eef'),
    point: o(9.5, 9.5, 1, '#444', '#444'),
    line: p('M4 14l9-10') + n('4,14 14,4'),
    dline: p('M2 9l7-7M8 16l8-8') + n('4,13 14,4'),
    mline: p('M2 9l7-7M9 16l7-7') + p('M7 11l5-5', DARK, 1) + n('4,14 14,4'),
    circle: o(9, 9, 7.5) + n('9,9 16,9'),
    arc: p('M4 13q-4-6 1-9 6-4 10 1v4M9 9h7') + n('9,9 16,9 4,14'),
    curve: p('M3 14q6-18 11 0') + n('2,15 16,15 4,3 14,3'),
    box: f('M3.500 5.500l3-3h9v9l-3 3z', '#bbb') + r(3, 5, 9, 9, DARK, '#fff') + n('15,3 15,11 3,15'),
    slab: f('M4 6l7-4 3 1v9l-7 4-3-1z', '#888') + p('M7 7l7-4M7 7v9') + n('6,16 13,13'),
    pan: p('M9.500 2v15M2 9.500h15M7 4l2.500-2 2.500 2M7 15l2.500 2 2.500-2M4 7l-2 2.500 2 2.500M15 7l2 2.500-2 2.500') + p('M1 .5h16', GREY),
    text: `<text x="9" y="16" text-anchor="middle" class="big-letter" font-size="19" fill="#444">A</text>`,
    fill: r(1, 1, 9, 9, DARK, '#fff') + f('M3 3h4v3h-4z', RED, RED) + f('M6 6h10v10h-10z', '#44f', '#44f') + p('M10 1q8 1 5 6l-5 6', RED),
    snap: o(9, 9, 7.5, '#3a3', '#ff8') + p('M4 8h4v-4M10 4v4h4M4 10h4v4M10 14v-4h4M5 5l3 3M13 5l-3 3M5 13l3-3M13 13l-3-3', '#33a'),
    dimension: o(4, 4, 2.5) + o(8, 4, 2.5) + p('M8 14l5-5M13 12v-3h-3') + n('6,15 15,7'),
    modify: p('M2 12l10-10') + p('M5 15l10-10', RED) + p('M2 15v-5M2 15h4M2 15l6-6M13 4l-4 4M15 9v-4h-4', '#44f'),
    shape: f('M2 9l5-6h6l3 4-2 7h-10z', '#ccc', GREY) + o(12, 8, 4, GREY, '#eee'),
    spray: f('M3 3l4-2 4 5-3 4z', '#cc3') + p('M3 3l5 6M5 6l4-3M9 10l2 2') + n('15,9 12,14 5,13', '#4a9'),
    vertex: p('M4 13l9-9M4 9l9 1') + n('6,11 11,7', '#998') + f('M12 1h5v5z', RED, RED) + f('M1 11l6 6h-6z', '#44f', '#44f'),
    calc: f('M1.500 3.500h14v12h-14z', '#088', '#034') + f('M3.500 5.500h10v2h-10z', '#fff', '#034') + p('M4 10h9M4 12h9M4 14h9', '#4ee', 1),

    sn1: p('M1 14l3 3M1 17l3-3M14 2l3 3M17 2l-3 3', RED) + o(10, 10, 4.5, GREY) + p('M3 3h8v4M4 3l-1 4 4 6'),
    sn2: p('M5 9.500h8M10 7l3 2.500-3 2.500', '#000') + n('3,9', '#888') + n('15,9', '#f00'),
    sn3: p('M2 14l6-6 5 7', '#000') + p('M13 5l3 9', '#fff', 1) + n('13,3', DARK) + n('8,8', '#f00'),
    sn4: p('M3 15l12-12', '#000') + n('6,12 11,7', '#f00'),
    sn5: p('M3 15q-3-7 2-10 6-4 11 4', '#000') + n('9,9', '#f00'),
    sn6: p('M2.500 5.500h9v10h-9zM5.500 2.500h10v10h-10zM2.500 5.500l3-3M11.500 5.500l4-3M11.500 15.500l4-3M2.500 15.500l3-3', '#000') + n('9,9', '#f00'),
    sn7: o(9, 9, 7, '#000') + p('M9 2v14M2 9h14', '#000', 1) + n('9,2 9,16 2,9 16,9', '#f00'),
    sn8: p('M2 3l14 12M3 15l12-13', '#000') + n('9,8', '#f00'),
    sn9: p('M2 2.500h14M2 6.500h14M2 10.500h14M2 14.500h10', '#000', 1) + n('15,15', '#f00'),
    sn10: p('M7 3l-5 5 5 5 5-5', DARK) + p('M10 8l4 6', GREY) + n('12,3', GREY) + n('8,8', '#f00'),
    sn11: p('M4.500 3.500h9l3 11h-14z', '#000') + n('9,9', '#f00'),
    sn12: p('M2 15l7-9 7-2M9 6h7', '#000') + n('8,7', '#f00'),
    sn13: p('M2 13.500h14M9 5v7', '#000') + p('M7 3h5M7 5h5', '#f00') + n('9,13', '#f00'),
    sn14: p('M2 9.500h14M9 5v9', '#000') + p('M7 3h5M7 5h5', '#f00') + n('9,15', '#f00'),
    sn15: p('M2 9.500h14M9.500 2v15M4 4l11 11M15 4l-11 11', '#777') + p('M14 3h3', '#f00'),
    sn16: f('M3 15l6-12v12z', '#777', '#777') + p('M9 8l7 5-5 3') + n('9,13', '#f00'),
    sn17: `<path d="M5 11v-5q0-4 4-4t4 4v5" fill="none" stroke="#000" stroke-width="3"/>` + p('M5 16l4-3 4 3', '#000') + n('9,14', '#f00'),
    sn18: p('M3.500 4v11M11 11l4 4', '#000') + p('M5 3.500h6v6', '#000', 1) + n('3,4 11,10', '#f00'),
    sn19: p('M2 15l4-6M16 15l-4-6', '#000') + p('M6 8l3-6 3 6', '#000', 1) + n('6,8 12,8', '#f00'),

    poly: p('M4 9l7-6 4 4-5 5 2 4') + n('4,9 11,2 15,6 12,15'),
    polygon: o(9, 9, 7) + p('M7 16.500h5') + n('3,5 9,9'),
    tri: p('M4 3l12 6-8 7z') + n('4,3 16,9 8,15'),
    rect: r(3, 3, 12, 11, '#000') + n('3,3 15,15'),
    rrect: p('M9 3l-6 6 6 6 6-6z') + n('9,3 7,15') + p('M14 11v-3h3M14 8l3 4', BLUE),
    perp: p('M2 15l13-12M8 8l7 7') + n('8,8 15,15'),
    para: p('M2 10l8-8M8 15l9-9') + n('6,8 11,13'),
    ln1: o(8, 11, 5.5, '#222') + p('M5 2l11 11M6 16.500h4') + n('12,6'),
    ln2: p('M2 3q9 0 7 9-1 3-4 4M8 6l7 7') + n('8,6', '#f00') + n('15,14'),
    ln3: p('M2 3q9 0 7 9-1 3-4 4M8 6l7 7') + n('8,5') + n('16,13', '#f00'),
    ln4: p('M2 3h5M2 8q6 1 5-5l8 9M9 16q0-6 4-4v4M16 12v4') + n('6,4 14,12'),
    ln5: p('M2 10l6-1 2-7M6 16q0-6 4-9l6 1') + n('5,12 11,6'),
    ln6: p('M9.500 3v12M3 9l6 6 6-6') + n('9,2 3,9 15,9 9,15'),
    conc: o(9, 9, 7.5) + o(9, 9, 5) + o(9, 9, 2.5) + n('9,9 13,9 16,9'),
    c2: o(9, 9, 6.5) + p('M7 16.500h4') + n('3,9 15,9'),
    c3: o(10, 9, 6.5) + p('M2 2l8 3') + n('8,3 14,15'),
    c4: o(9, 9, 6.5) + p('M2 1.500h15') + p('M9 3v12', DARK, 1) + n('9,15 16,9'),
    c5: o(9, 9, 6) + n('5,4 14,4 9,15'),
    c6: o(9, 9, 6) + p('M3 2l4 2M2 16l3-3M16 12l-3 4') + n('9,3 4,11 14,13'),
    c7: o(10, 10, 4) + p('M2 14l12-12M6 17q3-3 8 0') + n('9,6 14,9 10,13'),
    el1: `<ellipse cx="9" cy="9" rx="7" ry="4" fill="none" stroke="#222"/>` + n('4,6 15,11'),
    el2: `<ellipse cx="9" cy="9" rx="8" ry="4.5" transform="rotate(-50 9 9)" fill="none" stroke="#222"/>` + p('M4 15l11-12', DARK, 1) + n('15,3 9,9 12,12 4,15'),
    el3: `<ellipse cx="9" cy="12" rx="7" ry="4" fill="none" stroke="#222"/>` + t(3, 6, 7, 'a:b', BLUE),
    cv1: p('M4 15q9-3 6-5l-5-2q-1-3 9-4') + n('4,15 10,10 6,7 14,4'),
    cv2: p('M3 15q2-14 6-12 3-3 6 12') + n('3,15 5,5 12,5 15,14'),
    cv3: p('M3 14q0-12 8-12 6 2 4 8-3 5-7 2-2-5 4-6') + n('3,14 12,7'),
    cv4: p('M6 6q-1-4 4-4 4 1 3 5 4 2 1 5 2 4-3 4M7 16q-6 0-4-5 2-1 4-1-4-2-1-4') + n('6,15 12,15') + p('M7 8l1 2'),
    cv5: p('M3 14l4-10 3 8 6-9', '#000') + p('M5 9l7-3', DARK, 1) + n('3,14 7,3 10,15 16,4', '#222'),
    cv6: p('M2 14q6-18 15 0M2 11q6-16 14 0', GREY),
    d1: p('M3 9l6-6 6 6M5 14l4-4 5 5') + n('9,7 3,12 15,12'),
    d2: o(9, 9, 7) + o(9, 9, 4) + p('M7 16.500h5') + n('4,3 9,9'),
    d3: p('M2.500 2.500h9l5 5v9h-9l-5-5zM6.500 6.500h5l2 3v3h-5l-2-3z', '#000') + n('4,3 4,8 9,4 15,8 15,13 8,13'),
    d4: r(1, 1, 15, 14, '#000') + r(5, 5, 7, 6, '#000') + n('3,3 14,13'),
    d5: p('M9 2l-7 7 7 7 7-7zM9 5l-4 4 4 4 4-4z') + n('9,3 7,15') + p('M15 10l2 3', BLUE),
    d6: p('M2 8l7-6M6 5l10 10M3 8l9 9') + n('6,6 14,14'),
    d7: p('M2 9l7-7M6 13l8-8M9 16l8-8') + n('5,5 10,10'),

    cancel: `<path d="M4 3l10 12M14 3l-10 12" stroke="#999" stroke-width="3"/>`,
    table: r(2, 2, 14, 13, GREY, '#ddd') + p('M2 5.500h14M2 8.500h14M2 11.500h14M6 3v12M11 3v12', GREY),
    in1: f('M3 9l8-7h6v5l-8 5-6 4z', '#ccc') + p('M5 8l8-5M6 10l9-7') + p('M11 4h6v3', '#44f') + o(6, 12, 3),
    in2: r(1, 2, 6, 6, DARK) + r(9, 9, 6, 6, DARK) + p('M1 15l15-10M9 12h7M5 9l3-1'),
    in3: p('M2 15q1-7 5-7M10 7q5 0 6-5M2 12l3-2') + n('7,8 10,8') + p('M16 16l-5-5M11 14v-3h3', '#44f'),
    in4: r(1, 1, 15, 15, '#000', '#088') + f('M3 2h13v13z', '#0f0', '#0f0') + p('M3 2l13 13', '#fff') + r(2, 2, 13, 13, '#000'),
    in5: f('M2 3v13h12z', '#4aa') + t(6, 7, 7, 'WP'),
    in6: f('M2 3v13h12z', '#3d3') + t(7, 7, 7, 'CP'),
    in7: p('M10 3h-8v5h4v3h-3v5h11v-4h-5', '#2c2') + t(12, 8, 8, 'F'),
    in8: p('M2 3h8l3 3v6M4 3v6M2 6h8', GREY) + f('M9.500 7.500v8l2-2 2 3v-4h2z', '#eee', GREY),
    in9: f('M2 2h4v5z', RED, RED) + f('M11 16h5v-6z', '#6af', '#6af') + p('M5 6l7 7', RED) + n('12,3 4,13', '#dc9'),
    in10: p('M2 14l5-10 5 10zM4 14l5-10 5 10M5 11h6') + p('M10 16l4-8 3 8z', RED),
    in11: o(9, 5, 3.5, GREY) + f('M2 15q0-5 4-4h6q4 0 4 4z', '#ccc', GREY) + p('M4 9h10', GREY),
    in12: p('M1.500 1.500h15v15h-15z', GREY, 1) + r(3, 6, 9, 9, DARK, '#adf') + o(7, 10, 2.5) + p('M2 16l14-14', RED),
    in13: r(2, 2, 13, 13) + r(6, 6, 5, 5) + p('M3 3l12 12M15 3l-12 12', GREY),
    in14: r(2, 5, 10, 10) + o(7, 10, 2.5, GREY) + p('M9 9l6-6M11 3h5v3', GREY),
    in15: r(2, 5, 10, 10) + o(7, 10, 2.5, GREY) + p('M14.500 2v14M12 5h5M12 13h5', GREY),
    in16: r(8, 8, 8, 8) + p('M1 5l5-3h6v3M4 5l9 8M10 12h4M12 10v4', GREY),
    in17: r(2, 8, 8, 8) + p('M7 5l5-3h4v3l-9 7M5 10v4', GREY),
    in18: r(1, 7, 8, 8) + p('M6 12v-10M12 2h4v6h-4zM10 12h6', GREY),
    in19: p('M1.500 1.500h15v15h-15z', GREY, 1) + r(3, 3, 11, 11, '#338', '#bdf') + o(9, 9, 3) + p('M2 16l14-14', RED)
};

function drawIcon(name) {
    return `<svg width="18" height="18" viewBox="0 0 18 18">${icons[name]}</svg>`;
}

// "name*" is pressed, "name>" has a fly-out, "|" is a separator
document.querySelectorAll('[data-tools]').forEach(bar => {
    bar.innerHTML = bar.dataset.tools.split(' ').map(item => {
        if (item === '|') return '<span class="sep"></span>';
        const name = item.replace(/[*>]/g, '');
        const cls = 'tool' + (item.includes('*') ? ' active' : '') + (item.includes('>') ? ' fly' : '');
        return `<button class="${cls}" aria-label="${name}">${drawIcon(name)}</button>`;
    }).join('');
});

document.querySelectorAll('[data-icon]').forEach(tab => {
    tab.insertAdjacentHTML('afterbegin', drawIcon(tab.dataset.icon));
});

document.querySelectorAll('.combo').forEach(combo => {
    const color = combo.firstElementChild.disabled ? '#aaa' : '#444';
    combo.insertAdjacentHTML('beforeend', `<span class="combo-arrow"><svg width="8" height="7"><path d="M1 1.500l3 3 3-3" fill="none" stroke="${color}" stroke-width="2"/></svg></span>`);
});

document.querySelectorAll('[data-chevron]').forEach(btn => {
    const up = btn.dataset.chevron === 'up';
    btn.setAttribute('aria-label', up ? 'Collapse' : 'Expand');
    const d = up ? 'M1.500 4.500l3-3 3 3M1.500 8.500l3-3 3 3' : 'M1.500 1.500l3 3 3-3M1.500 5.500l3 3 3-3';
    btn.innerHTML = `<svg width="9" height="10"><path d="${d}" fill="none" stroke="#1a60b4" stroke-width="1.500"/></svg>`;
});

// inspector fields, true = with spin buttons
const fields = [
    ['Scale X', '1', true], ['Scale Y', '1', true], ['Scale Z', '1', true],
    ['Size X', '0 mm'], ['Size Y', '0 mm'], ['Size Z', '0 mm'],
    ['Pos X', '0 mm'], ['Pos Y', '0 mm'], ['Pos Z', '0 mm'],
    ['Delta X', '0 mm'], ['Delta Y', '0 mm'], ['Delta Z', '0 mm'],
    ['Rot X', '0', true], ['Rot Y', '0', true], ['Rot Z', '0', true],
    ['Delta Dist', '0 mm'], ['Delta Ang', '0', true]
];
const arrow = d => `<svg width="7" height="4"><path d="${d}" fill="#555"/></svg>`;
const spin = `<span class="spin"><button aria-label="Up">${arrow('M0 4h7l-3.500-4z')}</button><button aria-label="Down">${arrow('M0 0h7l-3.500 4z')}</button></span>`;

document.getElementById('fields').innerHTML = fields.map(([name, value, hasSpin], i) =>
    `<div class="field"><label for="field${i}">${name}</label><div class="field-box"><input id="field${i}" value="${value}" disabled>${hasSpin ? spin : ''}</div></div>`
).join('');

// rulers: pixels for 10 mm and where zero lies
const STEP = 15.35;
const ZERO_X = 44.5;
const ZERO_Y = 575.5;

function drawRulers() {
    let top = '', left = '';
    for (let i = -2; i <= 103; i++) {
        const x = Math.round(ZERO_X + i * STEP - 0.5) + 0.5;
        const len = i % 10 === 0 ? 14 : i % 5 === 0 ? 5 : 3;
        top += `<path d="M${x} ${14 - len}v${len}" stroke="#000"/>`;
        if (i % 10 === 0) top += `<text x="${x + 2}" y="9">${i * 10} mm</text>`;
    }
    for (let i = -25; i <= 36; i++) {
        const y = Math.round(ZERO_Y - i * STEP - 0.5) + 0.5;
        const len = i % 10 === 0 ? 13 : i % 5 === 0 ? 5 : 3;
        left += `<path d="M${14 - len} ${y}h${len}" stroke="#000"/>`;
        if (i % 10 === 0) left += `<text transform="translate(10 ${y - 2}) rotate(-90)">${i * 10} mm</text>`;
    }
    // cursor position
    top += '<path d="M799.500 0v14" stroke="#f0f"/>';
    left += '<path d="M0 65.500h14" stroke="#f0f"/>';
    document.getElementById('rulerTop').innerHTML = top;
    document.getElementById('rulerLeft').innerHTML = left;
}

drawRulers();
```
